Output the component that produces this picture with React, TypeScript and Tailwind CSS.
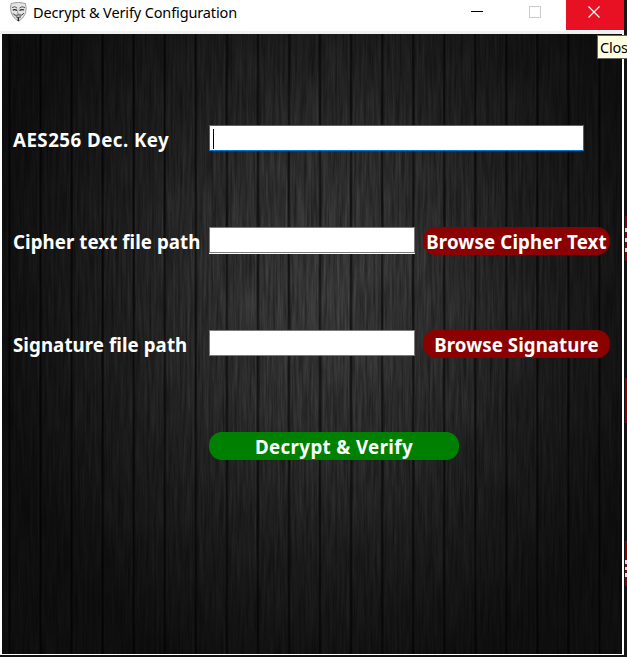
import type { ReactNode } from "react";

const font = "font-['Segoe_UI','Noto_Sans',sans-serif]";

function MaskIcon() {
  return (
    <svg width="19" height="20" viewBox="0 0 19 20" fill="none">
      <path d="M2 1.5Q9 -1 16.5 1.5Q17.8 6 16.6 11Q15 16 9.5 19.5Q4 16 2.2 11Q1 6 2 1.5Z" fill="#e4e4e4" stroke="#8a8a8a" strokeWidth=".8" />
      <path d="M3 5.6Q6 3.6 8.1 6.1M10.4 6.1Q13 3.6 16 5.6" stroke="#444" strokeWidth=".9" />
      <path d="M3.8 8.1Q6 6.9 8 8.4M10.5 8.4Q13 6.9 15.1 8.1" stroke="#222" strokeWidth="1.2" />
      <path d="M9 7.5L8.3 11.5H10.5" stroke="#999" strokeWidth=".8" />
      <path d="M4 11.3Q5.5 14.2 9.3 12.9Q13 14.2 14.9 11.3M6.8 14.8Q9.3 16 12 14.8" stroke="#333" strokeWidth="1" />
      <path d="M9.4 15.2V19" stroke="#222" strokeWidth="1.5" />
    </svg>
  );
}

function WoodBackdrop() {
  return (
    <svg className="absolute inset-0" width="620" height="620">
      <defs>
        <filter id="grain" x="0" y="0" width="100%" height="100%" colorInterpolationFilters="sRGB">
          <feTurbulence type="fractalNoise" baseFrequency="0.42 0.02" numOctaves="4" seed="8" />
          <feColorMatrix values="0.19 0 0 0 0.12  0.19 0 0 0 0.12  0.19 0 0 0 0.12  0 0 0 0 1" />
        </filter>
        <pattern id="planks" x="6" width="31.05" height="620" patternUnits="userSpaceOnUse">
          <rect width="1" height="620" fill="#000" opacity=".35" />
          <rect x="1" width="1.5" height="620" fill="#000" opacity=".7" />
          <rect x="30" width="1" height="620" fill="#fff" opacity=".04" />
          <rect x="17" width="1" height="620" fill="#000" opacity=".12" />
        </pattern>
        <radialGradient id="vignette" gradientUnits="userSpaceOnUse" cx="325" cy="260" r="400" gradientTransform="translate(325 0) scale(.85 1) translate(-325 0)">
          <stop offset="0" stopColor="#000" stopOpacity="0" />
          <stop offset=".35" stopColor="#000" stopOpacity=".22" />
          <stop offset=".65" stopColor="#000" stopOpacity=".5" />
          <stop offset="1" stopColor="#000" stopOpacity=".74" />
        </radialGradient>
      </defs>
      <rect width="620" height="620" filter="url(#grain)" />
      <rect width="620" height="620" fill="url(#planks)" />
      <rect width="620" height="620" fill="url(#vignette)" />
    </svg>
  );
}

function Label({ children, className }: { children: ReactNode; className: string }) {
  return <div className={`w-[196px] shrink-0 whitespace-nowrap text-[18.7px] font-bold leading-[30px] text-white ${className}`}>{children}</div>;
}

function Action({ children, className }: { children: ReactNode; className: string }) {
  return (
    <button className={`flex h-7 items-center justify-center whitespace-nowrap rounded-[13px] pt-[2px] text-[18.7px] font-bold leading-[28px] text-white ${className}`}>
      {children}
    </button>
  );
}

export default function App() {
  return (
    <div className={`flex h-[657px] w-[627px] overflow-hidden bg-[#141414] ${font}`}>
      <div className="flex h-[655px] w-[624px] shrink-0 flex-col bg-white">
        <header className="flex h-[31px] shrink-0 bg-white">
          <div className="flex w-[448px] pl-[9px] pt-[2px]">
            <MaskIcon />
            <span className="ml-[5px] whitespace-nowrap text-[14.5px] leading-[21px] tracking-[-0.13px] text-black">Decrypt &amp; Verify Configuration</span>
          </div>
          <div className="flex w-[59px] pl-[23px] pt-[11px]"><div className="h-px w-3 bg-black" /></div>
          <div className="flex w-[59px] pl-[22px] pt-[6px]"><div className="size-3 border border-[#cbcbcb]" /></div>
          <div className="flex h-[30px] w-[58px] bg-[#e81123] pl-[22px] pt-[6px]">
            <svg width="12" height="12" viewBox="0 0 12 12"><path d="M.5.5l11 11M11.5.5l-11 11" stroke="#fff" strokeWidth="1.1" /></svg>
          </div>
        </header>
        <div className="h-[3px] shrink-0 bg-[#f0f0f0]" />
        <main className="relative ml-[2px] h-[620px] w-[620px] shrink-0 overflow-hidden">
          <WoodBackdrop />
          <div className="relative flex flex-col pl-[11px] pt-[91px]">
            <div className="flex h-[102px]">
              <Label className="tracking-[0.48px]">AES256 Dec. Key</Label>
              <div className="h-[26px] w-[375px] border border-[#0078d7] bg-white pl-[3px] pt-[3px]"><div className="h-5 w-px bg-black" /></div>
            </div>
            <div className="flex h-[103px]">
              <Label className="tracking-[0.06px]">Cipher text file path</Label>
              <div className="h-[27px] w-[206px] border-b border-white"><div className="h-[26px] border border-[#7a7a7a] bg-white" /></div>
              <Action className="ml-2 w-[187px] bg-[#8b0000] tracking-[0.13px]">Browse Cipher Text</Action>
            </div>
            <div className="flex h-[102px]">
              <Label className="tracking-[0.07px]">Signature file path</Label>
              <div className="h-[26px] w-[206px] border border-[#7a7a7a] bg-white" />
              <Action className="ml-2 w-[187px] bg-[#8b0000] tracking-[0.06px]">Browse Signature</Action>
            </div>
            <Action className="ml-[196px] w-[250px] bg-[#008000] tracking-[0.38px]">Decrypt &amp; Verify</Action>
          </div>
        </main>
      </div>
      <div className="flex w-[3px] flex-col pl-px pt-[216px]">
        <div className="flex h-[45px] flex-col gap-[6px] bg-[#8b0000] pt-3"><div className="h-1 bg-[#ddd]" /><div className="h-1 bg-[#ddd]" /><div className="h-1 bg-[#ddd]" /></div>
        <div className="mt-[117px] h-[45px] bg-[#8b0000]" />
        <div className="mt-[118px] flex h-[45px] flex-col gap-[3px] bg-[#8b0000] pt-[19px]"><div className="h-1 bg-[#ddd]" /><div className="h-[3px] bg-[#ddd]" /><div className="h-1 bg-[#ddd]" /></div>
      </div>
      <div className="absolute left-[597px] top-[35px] h-6 w-[30px] overflow-hidden border border-r-0 border-[#646464] bg-[#ffffe1] pl-[2px] text-[14.5px] leading-[23px] tracking-[-0.2px] text-black">Close</div>
    </div>
  );
}
